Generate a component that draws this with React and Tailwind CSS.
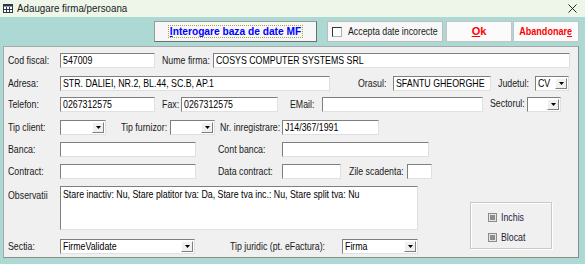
import React from 'react';

const FONT = "font-['Liberation_Sans',Arial,sans-serif]";

// Narrow text: the original dialog uses an Arial Narrow–like face
const T = ({ children, className = '' }) => (
  <span className={`inline-block origin-left scale-x-[0.8] whitespace-nowrap ${className}`}>{children}</span>
);

const Label = ({ children, className = '' }) => (
  <div className={`shrink-0 text-[11px] leading-[15px] text-[#1a1a1a] whitespace-nowrap ${className}`}>
    <T>{children}</T>
  </div>
);

const Input = ({ value = '', className = '' }) => (
  <div
    className={`shrink-0 h-[15px] bg-white border border-t-[#7f7f7f] border-l-[#7f7f7f] border-r-[#e0e0e0] border-b-[#e0e0e0] pl-[2px] text-[11px] leading-[13px] text-black whitespace-nowrap overflow-hidden ${className}`}
  >
    <T>{value}</T>
  </div>
);

const Combo = ({ value = '', className = '' }) => (
  <div
    className={`shrink-0 h-[15px] flex bg-white border border-t-[#7f7f7f] border-l-[#7f7f7f] border-r-[#e0e0e0] border-b-[#e0e0e0] text-[11px] leading-[13px] text-black ${className}`}
  >
    <div className="flex-1 min-w-0 pl-[2px] whitespace-nowrap overflow-hidden">
      <T>{value}</T>
    </div>
    <div className="shrink-0 w-[12px] h-[11px] mt-[1px] mr-[1px] flex items-center justify-center bg-[#f0f0f0] border border-t-white border-l-white border-r-[#7f7f7f] border-b-[#7f7f7f]">
      <svg width="5" height="3" viewBox="0 0 5 3">
        <path d="M0 0h5L2.5 3z" fill="#000" />
      </svg>
    </div>
  </div>
);

const GrayCheck = () => (
  <div className="shrink-0 w-[9px] h-[9px] border border-[#8a8a8a] bg-[#e6e6e6] flex items-center justify-center">
    <div className="w-[5px] h-[5px] bg-[#8c8c8c]" />
  </div>
);

const App = () => {
  return (
    <div className={`w-[585px] h-[264px] bg-[#acd9d3] overflow-hidden ${FONT}`}>
      {/* Title bar */}
      <div className="h-[17px] bg-[#eef6ea] flex items-center">
        <svg className="ml-[3px]" width="10" height="9" viewBox="0 0 10 9">
          <rect x="0.5" y="0.5" width="9" height="8" fill="#fff" stroke="#2a3a4a" />
          <rect x="0.5" y="0.5" width="9" height="2" fill="#2a3a4a" />
          <path d="M3.5 3v5M6.5 3v5M1 5.5h8" stroke="#2a3a4a" strokeWidth="1" />
        </svg>
        <span className="ml-[4px] text-[11.5px] text-[#1a1a1a] inline-block origin-left scale-x-[0.85] whitespace-nowrap">
          Adaugare firma/persoana
        </span>
        <svg className="ml-auto mr-[8px]" width="9" height="9" viewBox="0 0 9 9">
          <path d="M0.5 0.5l8 8M8.5 0.5l-8 8" stroke="#222" strokeWidth="1" />
        </svg>
      </div>

      {/* Toolbar */}
      <div className="h-[29px] flex pt-[4px]">
        <button className="ml-[154px] w-[163px] h-[21px] bg-[#f7f7f7] border border-[#9a9a9a] border-r-[#6e6e6e] border-b-[#6e6e6e] flex items-center justify-center">
          <span className="px-[1px] border border-dotted border-[#a8a830] text-[10.2px] leading-[11px] font-bold text-[#0000ff] whitespace-nowrap">
            <span className="underline">I</span>nterogare baza de date MF
          </span>
        </button>
        <div className="ml-[10px] w-[116px] h-[21px] bg-[#f7f7f7] border border-[#bdbdbd] flex items-center">
          <div className="shrink-0 ml-[4px] w-[10px] h-[10px] bg-white border border-t-[#333] border-l-[#333] border-r-[#b0b0b0] border-b-[#b0b0b0]" />
          <span className="ml-[6px] text-[11px] text-[#1a1a1a]">
            <T>Accepta date incorecte</T>
          </span>
        </div>
        <button className="ml-[3px] w-[66px] h-[21px] bg-[#fbfbfb] border border-[#c4c4c4] text-[11px] font-bold text-[#ff0000]">
          <span className="underline">O</span>k
        </button>
        <button className="ml-[1px] w-[66px] h-[21px] bg-[#fbfbfb] border border-[#c4c4c4] text-[10.5px] font-bold text-[#ff0000] flex items-center justify-center">
          <span className="inline-block scale-x-[0.86] whitespace-nowrap">
            Abandonar<span className="underline">e</span>
          </span>
        </button>
      </div>

      {/* Form panel */}
      <div className="ml-[3px] w-[576px] h-[212px] bg-[#f0f0f0] border border-[#a8a8a8] border-r-[#8a8a8a] border-b-[#8a8a8a] pl-[4px]">
        {/* Row 1 */}
        <div className="mt-[6px] flex items-center">
          <Label className="w-[52px]">Cod fiscal:</Label>
          <Input className="w-[95px]" value="547009" />
          <Label className="ml-[7px] w-[51px]">Nume firma:</Label>
          <Input className="w-[357px]" value="COSYS COMPUTER SYSTEMS SRL" />
        </div>
        {/* Row 2 */}
        <div className="mt-[8px] flex items-center">
          <Label className="w-[52px]">Adresa:</Label>
          <Input className="w-[270px]" value="STR. DALIEI, NR.2, BL.44, SC.B, AP.1" />
          <Label className="ml-[28px] w-[35px]">Orasul:</Label>
          <Input className="w-[98px]" value="SFANTU GHEORGHE" />
          <Label className="ml-[7px] w-[37px]">Judetul:</Label>
          <Combo className="w-[34px]" value="CV" />
        </div>
        {/* Row 3 */}
        <div className="mt-[6px] flex items-center">
          <Label className="w-[52px]">Telefon:</Label>
          <Input className="w-[95px]" value="0267312575" />
          <Label className="ml-[7px] w-[19px]">Fax:</Label>
          <Input className="w-[97px]" value="0267312575" />
          <Label className="ml-[12px] w-[32px]">EMail:</Label>
          <Input className="w-[161px]" />
          <Label className="ml-[7px] w-[37px] -mt-[3px]">Sectorul:</Label>
          <Combo className="w-[34px]" />
        </div>
        {/* Row 4 */}
        <div className="mt-[8px] flex items-center">
          <Label className="w-[52px]">Tip client:</Label>
          <Combo className="w-[46px]" />
          <Label className="ml-[15px] w-[49px]">Tip furnizor:</Label>
          <Combo className="w-[45px]" />
          <Label className="ml-[5px] w-[62px]">Nr. inregistrare:</Label>
          <Input className="w-[97px]" value="J14/367/1991" />
        </div>
        {/* Row 5 */}
        <div className="mt-[7px] flex items-center">
          <Label className="w-[52px]">Banca:</Label>
          <Input className="w-[136px]" />
          <Label className="ml-[22px] w-[64px]">Cont banca:</Label>
          <Input className="w-[147px]" />
        </div>
        {/* Row 6 */}
        <div className="mt-[7px] flex items-center">
          <Label className="w-[52px]">Contract:</Label>
          <Input className="w-[136px]" />
          <Label className="ml-[22px] w-[64px]">Data contract:</Label>
          <Input className="w-[59px]" />
          <Label className="ml-[8px] w-[58px]">Zile scadenta:</Label>
          <Input className="w-[25px]" />
        </div>
        {/* Rows 7-8 with status box */}
        <div className="flex">
          <div>
            <div className="mt-[7px] flex">
              <Label className="w-[52px] mt-[2px]">Observatii</Label>
              <div className="shrink-0 w-[358px] h-[44px] bg-white border border-t-[#7f7f7f] border-l-[#7f7f7f] border-r-[#e0e0e0] border-b-[#e0e0e0] pl-[2px] pt-[1px] text-[11px] leading-[13px] text-black overflow-hidden">
                <T>Stare inactiv: Nu, Stare platitor tva: Da, Stare tva inc.: Nu, Stare split tva: Nu</T>
              </div>
            </div>
            <div className="mt-[9px] flex items-center">
              <Label className="w-[52px]">Sectia:</Label>
              <Combo className="w-[135px]" value="FirmeValidate" />
              <Label className="ml-[35px] w-[112px]">Tip juridic (pt. eFactura):</Label>
              <Combo className="w-[76px]" value="Firma" />
            </div>
          </div>
          <div className="ml-[52px] mt-[23px] w-[82px] h-[47px] border border-[#c8c8c8] shadow-[inset_1px_1px_0_#ffffff,1px_1px_0_#ffffff] flex flex-col pl-[17px] pt-[8px] gap-[8px]">
            <div className="flex items-center gap-[4px]">
              <GrayCheck />
              <span className="text-[11px] leading-[12px] text-[#1c1c3c]">
                <T>Inchis</T>
              </span>
            </div>
            <div className="flex items-center gap-[4px]">
              <GrayCheck />
              <span className="text-[11px] leading-[12px] text-[#1c1c3c]">
                <T>Blocat</T>
              </span>
            </div>
          </div>
        </div>
      </div>
    </div>
  );
};

export default App;
